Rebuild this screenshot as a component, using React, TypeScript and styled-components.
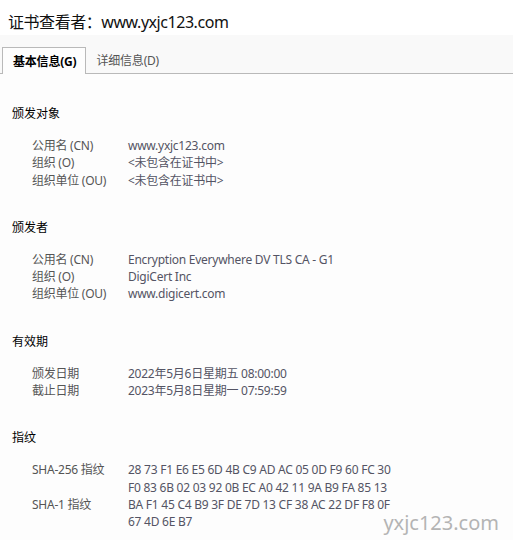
import styled, { createGlobalStyle } from 'styled-components';

const GlobalStyle = createGlobalStyle`
  html, body {
    margin: 0;
    padding: 0;
    background: #fdfdfd;
  }
  body {
    font-family: 'Noto Sans', 'Noto Sans CJK SC', sans-serif;
    font-size: 12px;
    color: #000;
  }
`;

interface Row {
  label: string;
  values: string[];
}

interface Section {
  title: string;
  rows: Row[];
}

const sections: Section[] = [
  {
    title: '颁发对象',
    rows: [
      { label: '公用名 (CN)', values: ['www.yxjc123.com'] },
      { label: '组织 (O)', values: ['<未包含在证书中>'] },
      { label: '组织单位 (OU)', values: ['<未包含在证书中>'] },
    ],
  },
  {
    title: '颁发者',
    rows: [
      { label: '公用名 (CN)', values: ['Encryption Everywhere DV TLS CA - G1'] },
      { label: '组织 (O)', values: ['DigiCert Inc'] },
      { label: '组织单位 (OU)', values: ['www.digicert.com'] },
    ],
  },
  {
    title: '有效期',
    rows: [
      { label: '颁发日期', values: ['2022年5月6日星期五 08:00:00'] },
      { label: '截止日期', values: ['2023年5月8日星期一 07:59:59'] },
    ],
  },
  {
    title: '指纹',
    rows: [
      {
        label: 'SHA-256 指纹',
        values: [
          '28 73 F1 E6 E5 6D 4B C9 AD AC 05 0D F9 60 FC 30',
          'F0 83 6B 02 03 92 0B EC A0 42 11 9A B9 FA 85 13',
        ],
      },
      {
        label: 'SHA-1 指纹',
        values: ['BA F1 45 C4 B9 3F DE 7D 13 CF 38 AC 22 DF F8 0F', '67 4D 6E B7'],
      },
    ],
  },
];

const Page = styled.div`
  position: relative;
  width: 513px;
  height: 540px;
  overflow: hidden;
`;

const Header = styled.div`
  height: 35px;
  background: #fff;
  padding: 6px 8px 0;
  box-sizing: border-box;
  display: flex;
  align-items: center;
  font-size: 16px;
  letter-spacing: -0.45px;
  color: #111;
`;

const TabBar = styled.div`
  height: 39px;
  background: #f9f9f9;
  border-bottom: 1px solid #b9b9b9;
  box-sizing: border-box;
  display: flex;
  align-items: flex-end;
  padding-left: 2px;
`;

const Tab = styled.div<{ $active?: boolean }>`
  box-sizing: border-box;
  display: flex;
  align-items: center;
  padding: 0 9px 0 10px;
  margin-bottom: ${(p) => (p.$active ? '-1px' : '0')};
  height: ${(p) => (p.$active ? '27px' : '26px')};
  font-size: 12px;
  letter-spacing: -0.2px;
  font-weight: ${(p) => (p.$active ? 700 : 400)};
  color: ${(p) => (p.$active ? '#000' : '#555')};
  background: ${(p) => (p.$active ? '#fdfdfd' : 'transparent')};
  border: ${(p) => (p.$active ? '1px solid #b9b9b9' : 'none')};
  border-bottom: none;
`;

const Body = styled.div`
  padding: 31px 0 0 12px;
`;

const SectionBlock = styled.section`
  margin-bottom: 30px;
`;

const SectionTitle = styled.div`
  height: 17px;
  line-height: 17px;
  margin-bottom: 15px;
`;

const Rows = styled.div`
  padding-left: 20px;
`;

const RowLine = styled.div`
  display: grid;
  grid-template-columns: 96px 1fr;
  color: #555;
  line-height: 17.3px;
  letter-spacing: -0.25px;
`;

const Value = styled.div`
  color: #545464;
`;

const Watermark = styled.div`
  position: absolute;
  right: 14px;
  bottom: 4px;
  font-size: 20px;
  color: #b4b4b4;
  font-family: 'Noto Sans', sans-serif;
`;

export default function App() {
  return (
    <Page>
      <GlobalStyle />
      <Header>证书查看者：www.yxjc123.com</Header>
      <TabBar>
        <Tab $active>基本信息(G)</Tab>
        <Tab>详细信息(D)</Tab>
      </TabBar>
      <Body>
        {sections.map((s) => (
          <SectionBlock key={s.title}>
            <SectionTitle>{s.title}</SectionTitle>
            <Rows>
              {s.rows.map((r) => (
                <RowLine key={r.label}>
                  <div>{r.label}</div>
                  <Value>
                    {r.values.map((v) => (
                      <div key={v}>{v}</div>
                    ))}
                  </Value>
                </RowLine>
              ))}
            </Rows>
          </SectionBlock>
        ))}
      </Body>
      <Watermark>yxjc123.com</Watermark>
    </Page>
  );
}
